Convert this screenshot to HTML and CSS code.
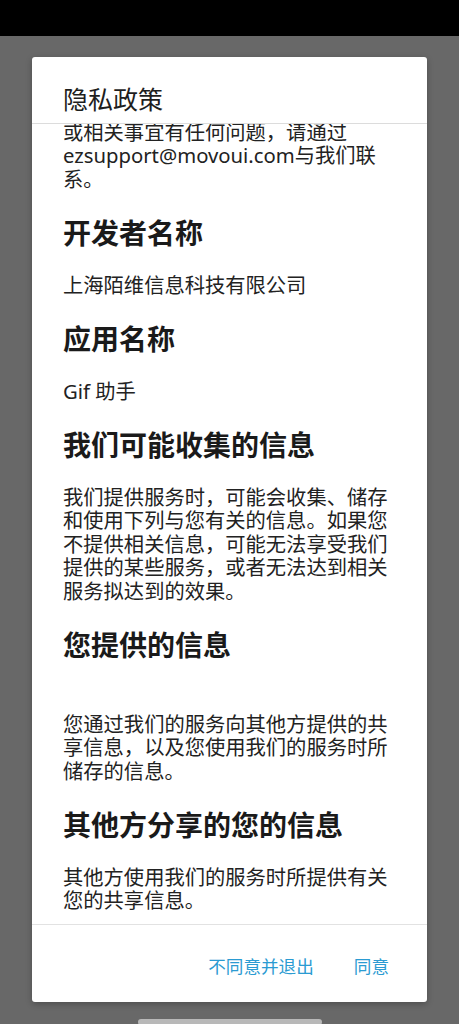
FILE: index.html
```html
<!DOCTYPE html>
<html lang="zh-CN">
<head>
<meta charset="utf-8">
<title>隐私政策</title>
<link rel="stylesheet" href="styles.css">
</head>
<body>
<div class="screen">
  <div class="statusbar"></div>
  <div class="scrim">
    <div class="dialog">
      <div class="dialog-title">隐私政策</div>
      <div class="dialog-body">
        <div class="policy">
          <p class="first">或相关事宜有任何问题，请通过ezsupport@movoui.com与我们联系。</p>
          <h2>开发者名称</h2>
          <p>上海陌维信息科技有限公司</p>
          <h2>应用名称</h2>
          <p>Gif 助手</p>
          <h2>我们可能收集的信息</h2>
          <p>我们提供服务时，可能会收集、储存和使用下列与您有关的信息。如果您不提供相关信息，可能无法享受我们提供的某些服务，或者无法达到相关服务拟达到的效果。</p>
          <h2>您提供的信息</h2>
          <p class="gap">您通过我们的服务向其他方提供的共享信息，以及您使用我们的服务时所储存的信息。</p>
          <h2>其他方分享的您的信息</h2>
          <p class="last">其他方使用我们的服务时所提供有关您的共享信息。</p>
        </div>
      </div>
      <div class="dialog-actions">
        <span class="action">不同意并退出</span>
        <span class="action">同意</span>
      </div>
    </div>
  </div>
  <div class="navbar"><div class="home-indicator"></div></div>
</div>
</body>
</html>
```

FILE: styles.css
```css
html, body {
  margin: 0;
  padding: 0;
}
body {
  width: 459px;
  height: 1024px;
  overflow: hidden;
  background: #686868;
  font-family: "Noto Sans", "Noto Sans CJK SC", sans-serif;
  color: #222;
}
.screen {
  display: flex;
  flex-direction: column;
  height: 1024px;
}
.statusbar {
  height: 36px;
  background: #000;
  flex: none;
}
.scrim {
  padding: 21px 32px 0 32px;
  flex: none;
}
.dialog {
  height: 945px;
  background: #fff;
  border-radius: 3px;
  display: flex;
  flex-direction: column;
  overflow: hidden;
  box-shadow: 0 2px 6px rgba(0,0,0,0.25);
}
.dialog-title {
  flex: none;
  height: 67px;
  box-sizing: border-box;
  padding: 26px 31px 0 31px;
  font-family: "Noto Sans CJK SC", sans-serif;
  font-size: 25px;
  line-height: 30px;
  color: #1e1e1e;
  border-bottom: 1px solid #dcdcdc;
}
.dialog-body {
  flex: 1;
  overflow: hidden;
  padding: 0 31px;
}
.policy p {
  margin: 24.75px 0;
  font-size: 20.3px;
  line-height: 23.5px;
  color: #222;
}
.policy p.first {
  margin-top: -3.25px;
}
.policy p.gap {
  margin-top: 51.75px;
}
.policy p.last {
  margin-bottom: 0;
}
.policy h2 {
  margin: 24.75px 0;
  font-family: "Noto Sans CJK SC", sans-serif;
  font-size: 28px;
  line-height: 33px;
  font-weight: 700;
  color: #1a1a1a;
}
.dialog-actions {
  flex: none;
  height: 78px;
  box-sizing: border-box;
  border-top: 1px solid #e2e2e2;
  display: flex;
  justify-content: flex-end;
  align-items: flex-start;
  gap: 40px;
  padding: 28px 38px 0 0;
}
.action {
  font-family: "Noto Sans CJK SC", sans-serif;
  font-size: 17.6px;
  line-height: 26px;
  color: #2b9bd2;
}
.navbar {
  flex: 1;
  display: flex;
  justify-content: center;
  padding-top: 17px;
}
.home-indicator {
  width: 184px;
  height: 6px;
  border-radius: 3px;
  background: #b8b8b8;
}
```
